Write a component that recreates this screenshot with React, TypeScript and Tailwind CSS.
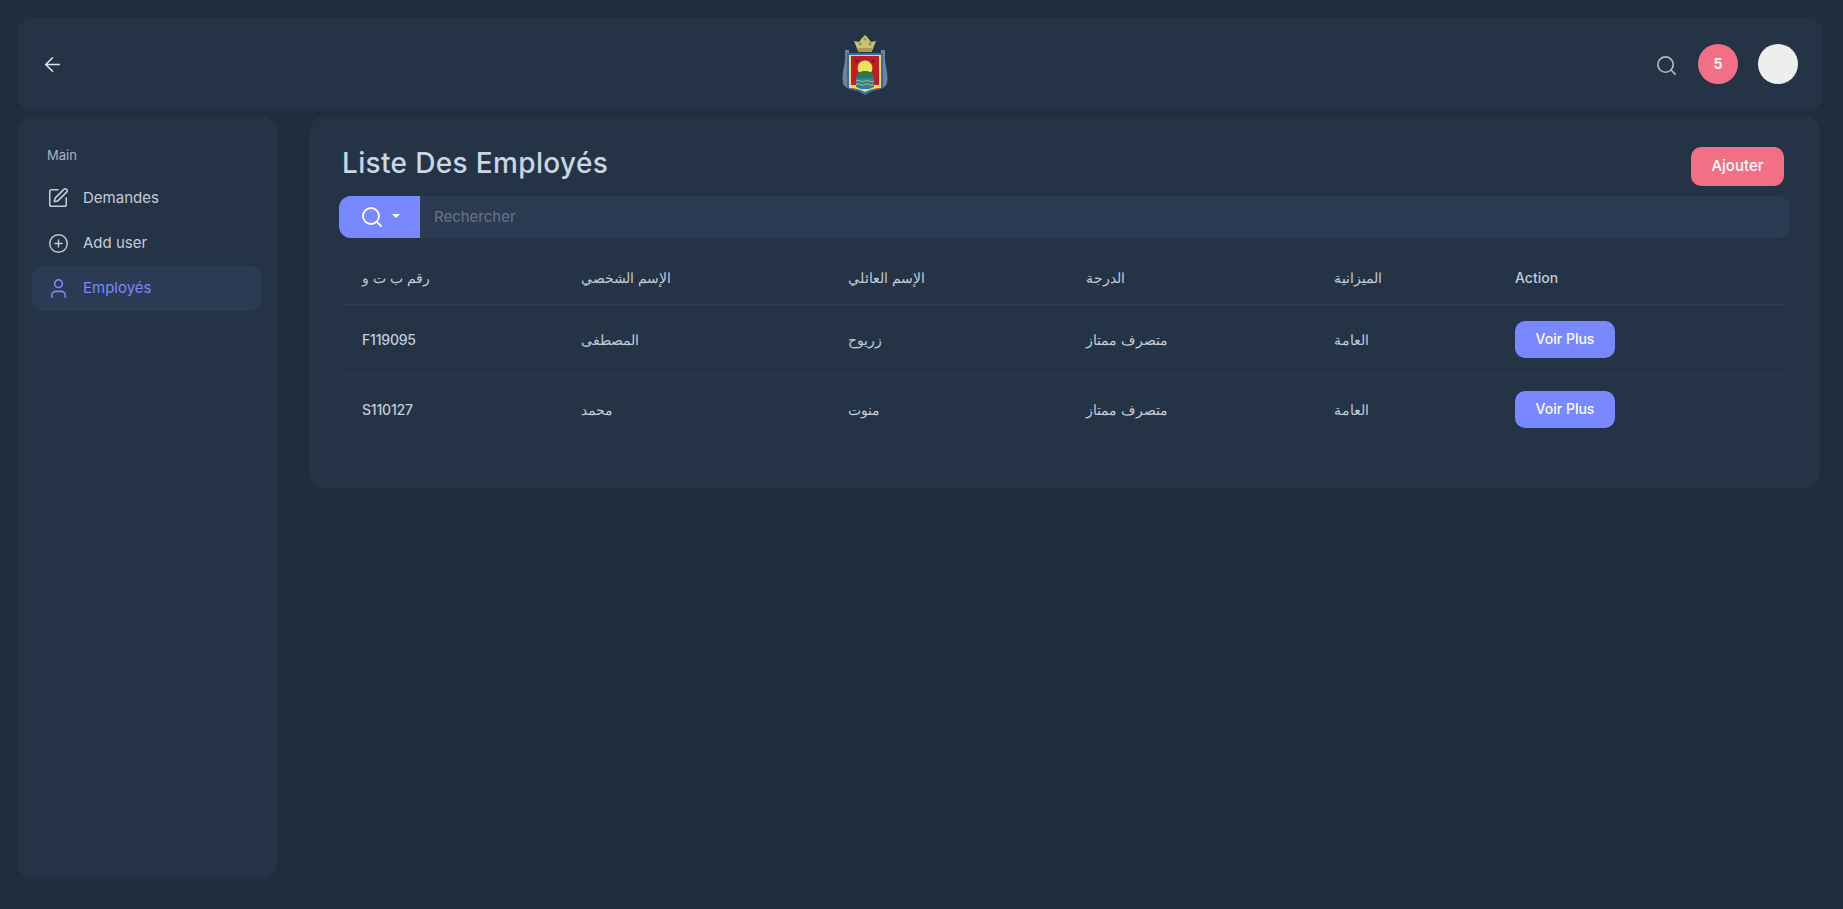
import { ArrowLeft, CirclePlus, Search, SquarePen, User } from "lucide-react";

const rows = [
  { id: "F119095", first: "المصطفى", last: "زريوح", grade: "متصرف ممتاز", budget: "العامة" },
  { id: "S110127", first: "محمد", last: "منوت", grade: "متصرف ممتاز", budget: "العامة" },
];

function Logo() {
  return (
    <svg width="46" height="60" viewBox="0 0 46 60">
      <defs>
        <filter id="soft">
          <feGaussianBlur stdDeviation="0.35" />
        </filter>
      </defs>
      <g filter="url(#soft)">
        {/* grey mantle */}
        <path d="M3 15 L7 15 L7 18 L39 18 L39 15 L43 15 L43 20 C42 28 47 38 45 48 C44 53 38 54 30 56 L23 60 L16 56 C8 54 2 53 1 48 C-1 38 4 28 3 20 Z" fill="#6f8296" />
        {/* crown */}
        <path d="M14 11 L12 6 L17 7 L20 3 L23 0 L26 3 L29 7 L34 6 L32 11 L30 16 L16 16 Z" fill="#c9c46a" />
        <circle cx="23" cy="4" r="1.6" fill="#8d9a72" />
        <circle cx="18" cy="9" r="1.4" fill="#7d8a5c" />
        <circle cx="28" cy="9" r="1.4" fill="#7d8a5c" />
        <rect x="16" y="13" width="14" height="4" fill="#a89b4c" />
        {/* shield */}
        <path d="M5 18 H41 V51 C41 54 36 55 30 56 L23 60 L16 56 C10 55 5 54 5 51 Z" fill="#2f6cb5" />
        <path d="M7 20 H39 V50 C39 52 34 53 29 54 L23 57 L17 54 C12 53 7 52 7 50 Z" fill="#e6dc58" />
        <path d="M9 21 H37 V54 H9 Z" fill="#bf1d26" />
        <path d="M7 53 C12 53 17 54 23 57 C29 54 34 53 39 53 L39 50 L7 50 Z" fill="#e6dc58" />
        {/* arch, sun, hills, sea */}
        <path d="M14 54 V42 H32 V54 Z" fill="#e6dc58" />
        <circle cx="23" cy="33" r="7.500" fill="#ece25f" />
        <circle cx="14.500" cy="26" r="1.500" fill="#3a2a2a" />
        <circle cx="31" cy="26" r="1.500" fill="#3a2a2a" />
        <path d="M14 44 C14 38 18 36 23 36 C28 36 32 38 32 44 Z" fill="#2c7a4a" />
        <path d="M14 43 H32 V52 L27 54 H19 L14 52 Z" fill="#2f7fa3" />
        <path d="M14 46 q2.200 -1.500 4.500 0 t4.500 0 t4.500 0 t4.500 0 M14 49.500 q2.200 -1.500 4.500 0 t4.500 0 t4.500 0 t4.500 0" stroke="#c7cf5d" strokeWidth="0.8" fill="none" />
      </g>
    </svg>
  );
}

function NavItem({
  icon,
  label,
  active,
}: {
  icon: React.ReactNode;
  label: string;
  active?: boolean;
}) {
  return (
    <div
      className={`flex h-[45px] items-center gap-[13px] rounded-xl px-[14px] text-[15px] ${active ? "bg-[#2b3b53] text-[#7a88ff]" : "text-[#c3ccd8]"}`}
    >
      <span className="flex w-6 justify-center">{icon}</span>
      <span>{label}</span>
    </div>
  );
}

export default function App() {
  return (
    <div className="flex h-screen flex-col gap-[5px] bg-[#212c3c] pt-[18px] pr-[20px] pb-[30px] pl-[17px] font-['Inter','Noto_Sans',sans-serif] text-[#c3ccd8]">
      {/* top bar */}
      <header className="grid h-[93px] shrink-0 grid-cols-[799px_46px_1fr] items-center rounded-2xl bg-[#253347] pr-[25px] pl-[26px]">
        <ArrowLeft size={23} strokeWidth={1.7} className="-ml-[2px] text-[#dfe5ec]" />
        <Logo />
        <div className="mb-[1px] flex items-center justify-end gap-5">
          <Search size={23} strokeWidth={1.7} className="mt-[2px] text-[#aebac6]" />
          <div className="flex h-10 w-10 items-center justify-center rounded-full bg-[#f26f86] text-sm font-bold text-white">
            5
          </div>
          <div className="h-10 w-10 rounded-full bg-[#eeeeee]" />
        </div>
      </header>

      <div className="flex min-h-0 flex-1 gap-8">
        {/* sidebar */}
        <aside className="w-[260px] shrink-0 rounded-2xl bg-[#253347] px-[15px] pt-[30px]">
          <p className="mb-[10px] pl-[15px] text-[13px] text-[#a9b3c0]">Main</p>
          <NavItem icon={<SquarePen size={22} strokeWidth={1.7} />} label="Demandes" />
          <NavItem icon={<CirclePlus size={21} strokeWidth={1.6} />} label="Add user" />
          <NavItem icon={<User size={23} strokeWidth={1.7} />} label="Employés" active />
        </aside>

        {/* main card */}
        <main className="mr-[3px] h-[372px] flex-1 rounded-2xl bg-[#253347] pt-[31px] pr-[30px] pl-[30px]">
          <div className="flex h-[49px] items-start justify-between pr-[6px] pl-[3px]">
            <h1 className="text-[28px] leading-[32px] font-medium tracking-[0.35px] text-[#c9d6e3]">
              Liste Des Employés
            </h1>
            <button className="h-[39px] w-[93px] rounded-[10px] bg-[#f26f86] text-[15px] font-medium text-white">
              Ajouter
            </button>
          </div>

          <div className="flex h-[42px] overflow-hidden rounded-xl bg-[#2b3b53]">
            <div className="flex w-[81px] items-center justify-center gap-[8px] bg-[#7a88ff] text-white">
              <Search size={24} strokeWidth={1.8} />
              <span className="mb-[3px] border-x-[4px] border-t-[4px] border-x-transparent border-t-white" />
            </div>
            <span className="flex items-center pl-[14px] text-[15px] text-[#6b7582]">Rechercher</span>
          </div>

          <table className="mt-[10px] ml-[3px] w-[1445px] table-fixed border-collapse text-left text-sm">
            <thead>
              <tr className="h-[56px] border-b border-[#2e3d57]">
                <th className="w-[219px] pt-[4px] pl-5 font-normal">رقم ب ت و</th>
                <th className="w-[267px] pt-[4px] pl-5 font-normal">الإسم الشخصي</th>
                <th className="w-[238px] pt-[4px] pl-5 font-normal">الإسم العائلي</th>
                <th className="w-[248px] pt-[4px] pl-5 font-normal">الدرجة</th>
                <th className="w-[181px] pt-[4px] pl-5 font-normal">الميزانية</th>
                <th className="pt-[4px] pl-5 font-medium">Action</th>
              </tr>
            </thead>
            <tbody>
              {rows.map((row, i) => (
                <tr key={row.id} className={`h-[70px] ${i === 0 ? "border-b border-[#2e3d57]" : ""}`}>
                  <td className="pt-[2px] pl-5 font-medium tracking-[-0.2px]">{row.id}</td>
                  <td className="pt-[2px] pl-5">{row.first}</td>
                  <td className="pt-[2px] pl-5">{row.last}</td>
                  <td className="pt-[2px] pl-5">{row.grade}</td>
                  <td className="pt-[2px] pl-5">{row.budget}</td>
                  <td className="pl-5">
                    <button className="h-[37px] w-[100px] rounded-[10px] bg-[#7a88ff] text-sm font-medium text-white">
                      Voir Plus
                    </button>
                  </td>
                </tr>
              ))}
            </tbody>
          </table>
        </main>
      </div>
    </div>
  );
}
